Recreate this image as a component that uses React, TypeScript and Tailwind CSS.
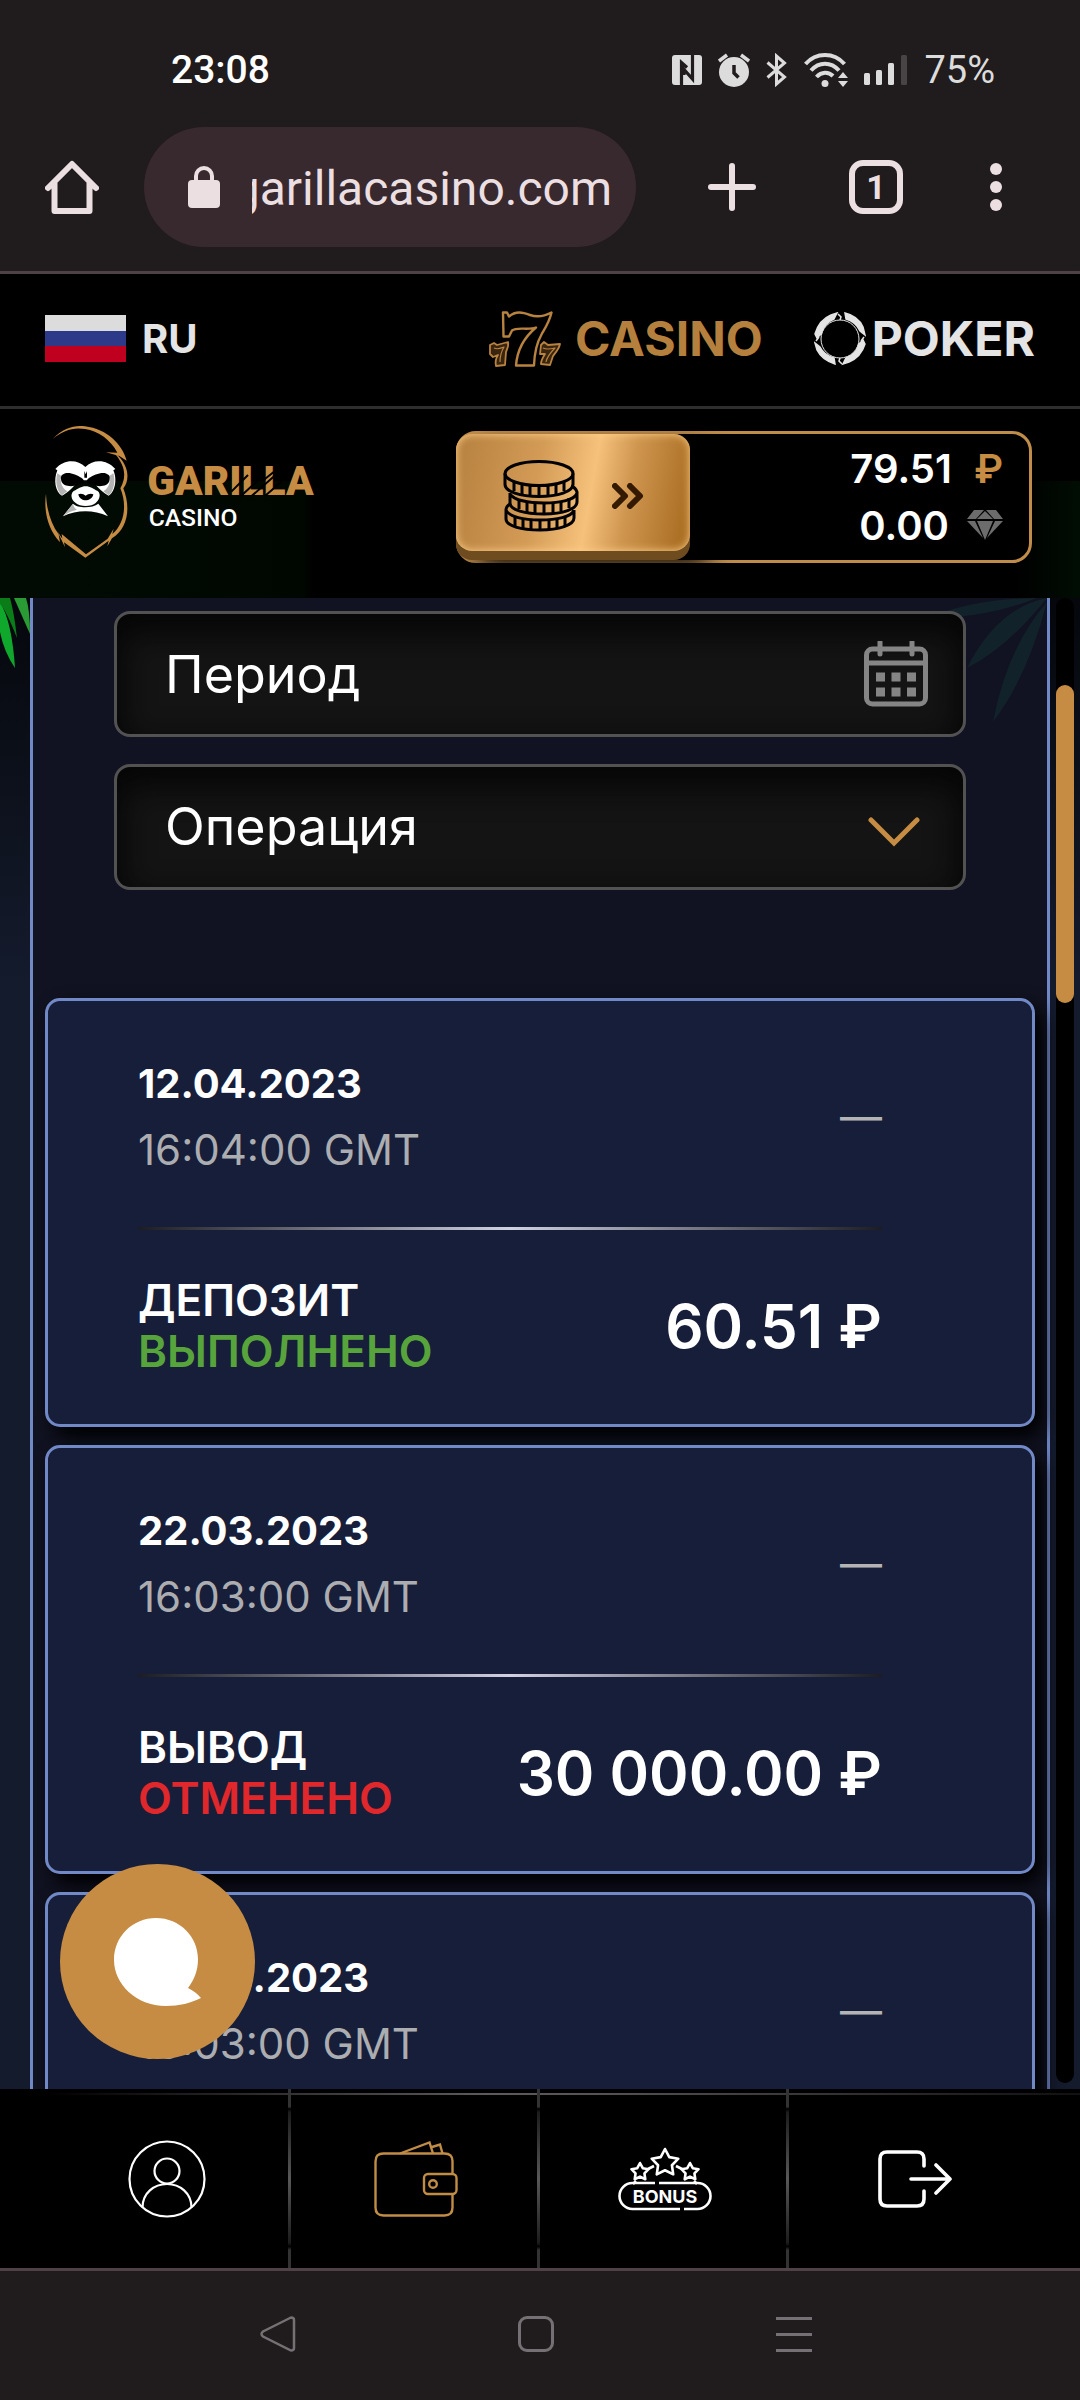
import type { ReactNode } from "react";

interface Transaction {
  id: number;
  date: string;
  time: string;
  type: string;
  status: string;
  statusClass: string;
  amount: string;
}

const transactions: Transaction[] = [
  {
    id: 1,
    date: "12.04.2023",
    time: "16:04:00 GMT",
    type: "ДЕПОЗИТ",
    status: "ВЫПОЛНЕНО",
    statusClass: "text-[#58a43c]",
    amount: "60.51 ₽",
  },
  {
    id: 2,
    date: "22.03.2023",
    time: "16:03:00 GMT",
    type: "ВЫВОД",
    status: "ОТМЕНЕНО",
    statusClass: "text-[#e0282c]",
    amount: "30 000.00 ₽",
  },
  {
    id: 3,
    date: "22.03.2023",
    time: "16:03:00 GMT",
    type: "ВЫВОД",
    status: "ОТМЕНЕНО",
    statusClass: "text-[#e0282c]",
    amount: "30 000.00 ₽",
  },
];

function StatusIcons() {
  return (
    <div className="flex items-center gap-4 text-[#dcdcdc]">
      <svg width="30" height="30" viewBox="0 0 30 30" fill="none">
        <rect width="30" height="30" rx="3" fill="currentColor" />
        <path
          d="M9.5 30V7.5L15 12.500M20.500 0V24L12 14.500V20"
          stroke="#201b1d"
          strokeWidth="3.200"
        />
      </svg>
      <svg width="32" height="34" viewBox="0 0 32 34" fill="none">
        <circle cx="16" cy="19" r="15" fill="currentColor" />
        <path d="M1 8L9 2M31 8L23 2" stroke="currentColor" strokeWidth="3.5" />
        <path d="M16 12v8l4.500 4.500" stroke="#201b1d" strokeWidth="3.5" />
      </svg>
      <svg width="22" height="34" viewBox="0 0 22 34" fill="none">
        <path
          d="M1.500 9.500L18.500 24 10.500 31V3l8 7L1.500 24.500"
          stroke="currentColor"
          strokeWidth="3"
        />
      </svg>
      <svg width="44" height="34" viewBox="0 0 44 34" fill="none">
        <path
          d="M1.500 11C12-1 30-1 40.500 11M7 17.500c8-9 20-9 28 0M12.500 24c5-5.500 12-5.500 16.500-1"
          stroke="currentColor"
          strokeWidth="4"
        />
        <circle cx="21" cy="30.500" r="3.500" fill="currentColor" />
        <path d="M34 25l5-6 5 6zM34 28h10l-5 6z" fill="currentColor" />
      </svg>
      <svg width="44" height="30" viewBox="0 0 44 30" fill="currentColor">
        <rect y="18" width="6" height="12" rx="1.500" />
        <rect x="12" y="15" width="6" height="15" rx="1.500" />
        <rect x="24" y="8" width="6" height="22" rx="1.500" />
        <rect x="37" width="6" height="30" rx="1.500" fill="#484345" />
      </svg>
      <span className="text-[38px] leading-10">75%</span>
    </div>
  );
}

function BrowserChrome() {
  return (
    <div className="shrink-0 border-b-3 border-[#4e4246] bg-[#201b1d] font-[Roboto,sans-serif]">
      <div className="flex items-center justify-between pt-[50px] pr-[85px] pb-[37px] pl-[171px]">
        <span className="text-[39px] leading-10 font-medium text-white">23:08</span>
        <StatusIcons />
      </div>
      <div className="flex h-[144px] items-center pr-[78px] pb-6 pl-[45px] text-[#ebdfe1]">
        <button aria-label="Home" className="mr-[45px]">
          <svg width="54" height="54" viewBox="0 0 54 54" fill="none">
            <path
              d="M3 28L27 4l24 24M9.500 23v28h35V23"
              stroke="currentColor"
              strokeWidth="6"
              strokeLinecap="round"
              strokeLinejoin="round"
            />
          </svg>
        </button>
        <div className="flex h-[120px] min-w-0 flex-1 items-center gap-8 rounded-full bg-[#38292e] pr-6 pl-11">
          <svg width="32" height="42" viewBox="0 0 32 42" className="shrink-0" fill="none">
            <rect y="14" width="32" height="28" rx="4" fill="currentColor" />
            <path d="M8 16V10a8 8 0 0 1 16 0v6" stroke="currentColor" strokeWidth="4" />
          </svg>
          <input
            aria-label="Address"
            dir="rtl"
            readOnly
            value="garillacasino.com"
            className="w-full min-w-0 bg-transparent pt-1 text-[48px] leading-[60px] outline-none"
          />
        </div>
        <button aria-label="New tab" className="ml-[72px]">
          <svg width="48" height="48" viewBox="0 0 48 48">
            <path
              d="M24 3v42M3 24h42"
              stroke="currentColor"
              strokeWidth="6"
              strokeLinecap="round"
            />
          </svg>
        </button>
        <button
          aria-label="Tabs"
          className="ml-[93px] flex size-[54px] items-center justify-center rounded-[14px] border-6 border-[#ebdfe1] text-[34px] leading-10 font-bold"
        >
          1
        </button>
        <button aria-label="Menu" className="ml-[87px]">
          <svg width="12" height="48" viewBox="0 0 12 48" fill="currentColor">
            <circle cx="6" cy="6" r="6" />
            <circle cx="6" cy="24" r="6" />
            <circle cx="6" cy="42" r="6" />
          </svg>
        </button>
      </div>
    </div>
  );
}

function SevensIcon() {
  return (
    <svg width="72" height="56" viewBox="0 0 72 56" fill="none" stroke="#b8823f" strokeLinejoin="round">
      <path
        d="M14 1.500h4l2 4c7-6 14-4 21-1.500s13 2 21.500-2.500c-2 9-6 15-10 22s-7 17-7.500 31H27c1-14 8-28 20-38-8 3-19-1-24 3l-3 6h-5.500z"
        strokeWidth="2.400"
      />
      <path
        d="M1 34l4-2 3 2 11-3c1 4-1 7-2 10l-1 13-9 1c-1-4 0-8 2-11l-5 2-3-3z"
        fill="#3a2510"
        strokeWidth="1.800"
      />
      <path d="M5 37c4 2 7 0 10-1-3 5-4 9-4 15" strokeWidth="1.200" />
      <path
        d="M52 34l3-3 4 3 12-1c-1 5-4 8-7 12l-3 9-9-1c0-4 2-7 4-10h-5z"
        fill="#3a2510"
        strokeWidth="1.800"
      />
      <path d="M54 37c4 2 8 1 12 0-5 5-8 9-9 14" strokeWidth="1.200" />
    </svg>
  );
}

function PokerIcon() {
  return (
    <svg width="52" height="54" viewBox="0 0 52 54" fill="none" stroke="#e4e4e4">
      <circle cx="26" cy="27" r="19" strokeWidth="1" />
      <path
        d="M1 22Q5 8 17 3l6-2-3 6Q10 11 7 22l-4 4zM31 1q13 3 18 14l2 8-5-4Q42 10 32 7zM51 32q-4 13-16 18l-6 2 3-6q10-3 13-14l4-4zM21 52Q8 48 3 38l-2-7 5 4q4 8 14 11z"
        fill="#e4e4e4"
        strokeWidth="1.500"
      />
      <path d="M24 2l3 3-1 3M50 25l-3 4M28 52l-3-3 1-3M2 29l3-4" strokeWidth="1.500" />
    </svg>
  );
}

function Logo() {
  return (
    <svg width="270" height="143" viewBox="45 30 810 429" role="img" aria-label="Garilla Casino">
      <g fill="#c68c43">
        <path d="M68 72C100 38 135 29 165 34c66 8 112 54 125 103l-22-14-40-11 34 1C243 75 205 48 165 42c-36-6-66 4-97 30z" />
        <path d="M258 116c40 36 42 78 22 104 24 62 12 122-34 150l-14 24 4-17-70 51-64-46 3 15-23-48 15 22-2-14 73 61 65-47 18-30-4 16c38-32 44-90 24-137 18-32 16-64-13-100z" />
        <path d="M48 236c-8 55 8 110 42 146l-4-24C62 325 50 285 48 236z" />
      </g>
      <path
        d="M76 162c26-30 66-30 90-6 24-24 64-24 90 6l-6 4c14 32 2 68-14 76-16-8-38-28-50-46l-20 0-20 0c-12 18-34 38-50 46-20-10-26-48-14-76z"
        fill="#fff"
      />
      <path
        d="M82 175c-8 26 0 56 14 66l16-12c-20-12-22-34-18-46zM250 175c8 26 0 56-14 66l-16-12c20-12 22-34 18-46z"
        fill="#b4b4b4"
      />
      <path
        d="M96 180c14-14 42-2 58 8 6 4 8 8 8 14-20 14-62 18-68-4-2-8-2-14 2-18zM236 180c-14-14-42-2-58 8-6 4-8 8-8 14 20 14 62 18 68-4 2-8 2-14-2-18zM163 168l4 10 4-10v20h-8z"
        fill="#000"
      />
      <path
        d="M167 214c14 0 22 8 36 14 12 10 4 28-6 36-12 12-48 12-60 0-12-8-18-26-6-36 14-6 22-14 36-14z"
        fill="#fff"
      />
      <path d="M145 238c8-4 16 0 22 4 6-4 14-8 23-4-2 12-14 18-23 18s-20-6-22-18z" fill="#000" />
      <path d="M99 304l30-38c14 14 58 14 76 0l29 38c-44-20-92-20-135 0z" fill="#fff" />
      <path d="M99 304l30-38c2 10 6 14 12 18-18 4-30 10-42 20z" fill="#b4b4b4" />
      <text
        x="352"
        y="240"
        fontSize="122"
        fontWeight="900"
        fontFamily="Roboto, sans-serif"
        fill="#c68c43"
      >
        GARILLA
      </text>
      <path
        d="M604 230l50-50M632 244l56-52M664 244l70-62M700 196l32-26M704 244l50-44"
        stroke="#000"
        strokeWidth="6"
      />
      <text x="356" y="334" fontSize="74" fontWeight="500" fontFamily="Roboto, sans-serif" fill="#fff">
        CASINO
      </text>
    </svg>
  );
}

function CoinsIcon() {
  return (
    <svg width="76" height="72" viewBox="0 0 76 72" fill="none" stroke="#000" strokeWidth="3">
      <ellipse cx="36" cy="13.500" rx="34" ry="12" />
      <path d="M2 13.500v11c0 7 15 12 34 12s34-5 34-12v-11" />
      <path d="M11 21v10M19 24v10M27 25v11M36 26v11M45 25v11M53 24v10M61 21v10" />
      <path d="M7 33v10c0 7 15 11 34 11s33-5 33-12V32c-1-3-3-5-6-6M7 34c4 6 18 9 34 9s31-3 33-10" />
      <path d="M16 40v9M24 42v10M32 43v11M41 43v11M50 43v11M58 41v10M66 38v10" />
      <path d="M7 44c-3 2-4 4-4 6v9c0 7 15 11 34 11s34-5 34-12v-8M3 50c3 7 18 10 34 10s32-3 34-10" />
      <path d="M12 56v10M20 59v10M28 60v10M37 60v10M46 60v10M54 58v10M62 56v10" />
    </svg>
  );
}

function SiteHeader() {
  return (
    <header className="shrink-0 bg-black">
      <div className="flex h-[135px] items-center justify-between border-b-3 border-[#2e2e2e] px-[45px] pb-[3px]">
        <button className="flex items-center gap-4 text-[40px] leading-[46px] font-bold text-[#e4e4e4]">
          <span className="flex h-[47px] w-[81px] flex-col">
            <span className="flex-1 bg-[#dcdcdc]" />
            <span className="flex-1 bg-[#2d3a8a]" />
            <span className="flex-1 bg-[#c0001f]" />
          </span>
          RU
        </button>
        <nav className="flex items-center gap-[51px] text-[48px] leading-[56px] font-bold">
          <a href="#casino" className="flex items-center gap-[14px] text-[#b5803e]">
            <SevensIcon />
            CASINO
          </a>
          <a href="#poker" className="flex items-center gap-1.5 text-[#e4e4e4]">
            <PokerIcon />
            POKER
          </a>
        </nav>
      </div>
      <div className="flex items-center justify-between bg-[linear-gradient(to_bottom,#000_38%,transparent_38%),linear-gradient(to_right,#010b04,#000701_28%,#000_29%,#000_94%,#010d03)] pt-4 pr-12 pb-[30px] pl-[45px]">
        <a href="#home">
          <Logo />
        </a>
        <div className="flex h-[132px] w-[576px] rounded-[20px] border-3 border-[#c08c4a] bg-black">
          <button
            aria-label="Пополнить"
            className="-ml-[3px] flex h-[117px] w-[234px] items-center gap-[33px] rounded-[16px] bg-[linear-gradient(100deg,#b98341_4%,#d39b56_35%,#f6c17b_57%,#cf9650_72%,#a5681c)] pt-2 pl-[47px] shadow-[0_9px_0_#6e4c20,inset_0_0_9px_#ffd08a,20px_14px_24px_#000]"
          >
            <CoinsIcon />
            <svg width="32" height="26" viewBox="0 0 32 26" fill="none">
              <path
                d="M3 3l10 10L3 23M18 3l10 10-10 10"
                stroke="#331a00"
                strokeWidth="6"
                strokeLinecap="round"
                strokeLinejoin="round"
              />
            </svg>
          </button>
          <div className="flex flex-1 flex-col items-end justify-center pr-[26px] text-[40px] leading-[57px] font-semibold text-white">
            <span className="flex items-center gap-[22px]">
              79.51 <span className="text-[#c68c43]">₽</span>
            </span>
            <span className="flex items-center gap-[18px]">
              0.00
              <svg width="36" height="30" viewBox="0 0 36 30" fill="#6c6c6c">
                <path d="M7 0h10L9 9H0zM19 0h10l7 9h-9zM18 1l8 8H10zM0 11h8l8 17zM10 11h16l-8 19zM28 11h8L20 28z" />
              </svg>
            </span>
          </div>
        </div>
      </div>
    </header>
  );
}

function Filters() {
  const field =
    "h-[126px] w-full appearance-none rounded-[16px] border-3 border-[#525252] bg-[#141414] pr-28 pl-12 text-[52px] text-white shadow-[inset_0_14px_30px_6px_#060606] outline-none placeholder:text-white placeholder:opacity-100";

  return (
    <form className="relative flex flex-col gap-[27px] px-[69px]">
      <div className="relative">
        <input type="text" aria-label="Период" placeholder="Период" className={field} />
        <svg
          width="64"
          height="66"
          viewBox="0 0 64 66"
          fill="none"
          stroke="#858585"
          className="absolute top-[30px] right-[38px]"
        >
          <rect x="2.500" y="8" width="59" height="55" rx="6" strokeWidth="5" />
          <path d="M2 22h60" strokeWidth="5" />
          <path d="M16 1v12M48 1v12" strokeWidth="5" strokeLinecap="round" />
          <path d="M12 36h40M12 51h40" strokeWidth="9" strokeDasharray="9 6.500" />
        </svg>
      </div>
      <div className="relative">
        <select aria-label="Операция" className={field}>
          <option>Операция</option>
        </select>
        <svg
          width="52"
          height="30"
          viewBox="0 0 52 30"
          fill="none"
          className="pointer-events-none absolute top-[53px] right-[46px]"
        >
          <path
            d="M3 3l23 23L49 3"
            stroke="#c68c43"
            strokeWidth="5"
            strokeLinecap="round"
          />
        </svg>
      </div>
    </form>
  );
}

function TransactionCard({ item }: { item: Transaction }) {
  return (
    <li className="rounded-[15px] border-3 border-[#7289c8] bg-[#171e39] pt-[50px] pr-[150px] pb-[47px] pl-[90px] shadow-[8px_10px_20px_#000]">
      <div className="flex items-center justify-between leading-[66px]">
        <div>
          <p className="text-[40px] font-bold text-white">{item.date}</p>
          <p className="text-[42px] text-[#acadb0]">{item.time}</p>
        </div>
        <span className="text-[42px] text-[#b4b4b4]">—</span>
      </div>
      <div className="mt-11 mb-[45px] h-[3px] bg-[linear-gradient(to_right,#1c1c22,#d0d2e2,#1c1c22)]" />
      <div className="flex items-center justify-between">
        <div className="text-[44px] leading-[51px] font-semibold">
          <p className="text-white">{item.type}</p>
          <p className={item.statusClass}>{item.status}</p>
        </div>
        <p className="text-[60px] leading-[66px] font-semibold text-white">{item.amount}</p>
      </div>
    </li>
  );
}

function ChatButton() {
  return (
    <button
      aria-label="Чат"
      className="absolute bottom-[30px] left-[60px] flex size-[195px] items-center justify-center rounded-full bg-[#c68c43]"
    >
      <svg width="88" height="88" viewBox="0 0 88 88" fill="#fff">
        <path d="M42 0C66 0 84 19 84 41c0 12-4 21-10 29q8 4 13 10c-10 5-22 8-35 8C22 88 0 66 0 42 0 18 19 0 42 0z" />
      </svg>
    </button>
  );
}

function NavItem({ label, children, last }: { label: string; children: ReactNode; last?: boolean }) {
  return (
    <a href="#" aria-label={label} className="flex items-stretch">
      <span className="flex flex-1 items-center justify-center pl-[3px]">{children}</span>
      {!last && (
        <span className="w-[3px] bg-[linear-gradient(to_bottom,#333_10%,#000_11%,#1c1c1c_13%,#585858_50%,#1c1c1c_86%,#000_88%,#333_90%)]" />
      )}
    </a>
  );
}

function Star({ cx, cy, r }: { cx: number; cy: number; r: number }) {
  const points = Array.from({ length: 10 }, (_, i) => {
    const radius = i % 2 ? r * 0.52 : r;
    const angle = (Math.PI / 5) * i - Math.PI / 2;
    return `${cx + radius * Math.cos(angle)},${cy + radius * Math.sin(angle)}`;
  });
  return <polygon points={points.join(" ")} />;
}

function BottomNav() {
  return (
    <nav className="shrink-0 bg-black">
      <div className="grid h-[179px] grid-cols-4 bg-[linear-gradient(to_right,#000_4%,#5c5c5c_45%,#555_55%,#111)] bg-[length:100%_2px] bg-[position:0_4px] bg-no-repeat px-[42px]">
        <NavItem label="Профиль">
          <svg width="78" height="78" viewBox="0 0 78 78" fill="none" stroke="#fff" strokeWidth="2.200">
            <circle cx="39" cy="39" r="37.500" />
            <circle cx="39" cy="31" r="12.500" />
            <path d="M14.500 67.500C14.500 53 26 44 39 44s24.500 9 24.500 23.500" />
          </svg>
        </NavItem>
        <NavItem label="Кошелёк">
          <svg width="84" height="76" viewBox="0 0 84 76" fill="none" stroke="#c08c46" strokeWidth="2.400">
            <path d="M78.500 33V20q0-7.500-8-7.500h-61q-8 0-8 8v46q0 8 8 8h61q8 0 8-8V53" />
            <rect x="50" y="33" width="32.500" height="20" rx="4" />
            <circle cx="59" cy="43" r="3.800" />
            <path d="M26 12.500L55.500 1.500l3.500 11M58 6l8-2.500 2.500 9" />
          </svg>
        </NavItem>
        <NavItem label="Бонусы">
          <svg
            width="94"
            height="64"
            viewBox="0 0 94 64"
            fill="none"
            stroke="#fff"
            strokeWidth="2.600"
            strokeLinejoin="round"
          >
            <path d="M37 36H14.500a13 13 0 0 0 0 26H62M66 62h13.500a13 13 0 0 0 0-26H41" />
            <Star cx={47} cy={16} r={14} />
            <Star cx={22} cy={25} r={9} />
            <Star cx={72} cy={25} r={9} />
            <path d="M30 22l6-3M64 22l-6-3M18 34l-3 3M76 34l3 3" />
            <text
              x="47"
              y="55.500"
              textAnchor="middle"
              fontSize="18"
              fontWeight="700"
              fontFamily="Inter, sans-serif"
              fill="#fff"
              stroke="none"
            >
              BONUS
            </text>
          </svg>
        </NavItem>
        <NavItem label="Выход" last>
          <svg
            width="74"
            height="58"
            viewBox="0 0 74 58"
            fill="none"
            stroke="#fff"
            strokeWidth="3.600"
            strokeLinecap="round"
            strokeLinejoin="round"
          >
            <path d="M46 16V9q0-7-7-7H9Q2 2 2 9v40q0 7 7 7h30q7 0 7-7v-8M33 29h39M58 15l14 14-14 14" />
          </svg>
        </NavItem>
      </div>
    </nav>
  );
}

function SystemBar() {
  return (
    <div className="grid h-[132px] shrink-0 grid-cols-3 place-items-center border-t-3 border-[#4e4246] bg-[#201b1d] pr-[157px] pb-[3px] pl-[149px] text-[#747073]">
      <button aria-label="Back">
        <svg width="36" height="36" viewBox="0 0 36 36" fill="none">
          <path
            d="M31 1.500L3 15.500q-3 2.500 0 5l28 14q3 0 3-2.500V4q0-2.500-3-2.500z"
            stroke="currentColor"
            strokeWidth="2.500"
          />
        </svg>
      </button>
      <button aria-label="Home screen">
        <span className="block size-9 rounded-[9px] border-3 border-[#747073]" />
      </button>
      <button aria-label="Recent apps" className="flex w-9 flex-col gap-[13px]">
        <span className="h-[3px] bg-[#747073]" />
        <span className="h-[3px] bg-[#747073]" />
        <span className="h-[3px] bg-[#747073]" />
      </button>
    </div>
  );
}

export default function App() {
  return (
    <div className="flex h-screen flex-col overflow-hidden bg-black font-[Inter,sans-serif]">
      <BrowserChrome />
      <SiteHeader />
      <main className="relative flex min-h-0 flex-1 overflow-hidden bg-[linear-gradient(to_bottom,#05070c,#0b0f18_10%,#141b2d_26%,#141b2d)] pr-[6px] pl-[30px]">
        {/* palm leaf hanging from the header */}
        <svg width="30" height="74" viewBox="0 0 30 74" className="absolute top-0 left-0">
          <path d="M0 4Q12 24 15 70 4 54 0 34z" fill="#10a82c" />
          <path d="M14 0h12q4 12 4 36Q22 18 14 0z" fill="#2a9a35" />
          <path d="M0 0h10q4 14 7 40Q6 12 0 6z" fill="#0a7d18" />
        </svg>
        <section className="relative flex-1 border-x-3 border-[#7289c8] bg-[#111322] px-3 pt-[13px]">
          <svg width="130" height="130" viewBox="0 0 130 130" className="absolute top-0 right-0">
            <path
              d="M130 0Q80 10 50 70 90 50 130 0zM130 4Q90 50 76 124 110 80 130 4zM120 0Q60 0 10 20 70 20 120 0z"
              fill="#12222a"
            />
          </svg>
          <Filters />
          <ul className="mt-[108px] flex flex-col gap-[18px]">
            {transactions.map((item) => (
              <TransactionCard key={item.id} item={item} />
            ))}
          </ul>
        </section>
        <div className="mb-[6px] ml-[6px] w-[18px] shrink-0 rounded-full bg-black pt-[87px]">
          <div className="h-[318px] rounded-full bg-[#c68c43]" />
        </div>
        <ChatButton />
      </main>
      <BottomNav />
      <SystemBar />
    </div>
  );
}
